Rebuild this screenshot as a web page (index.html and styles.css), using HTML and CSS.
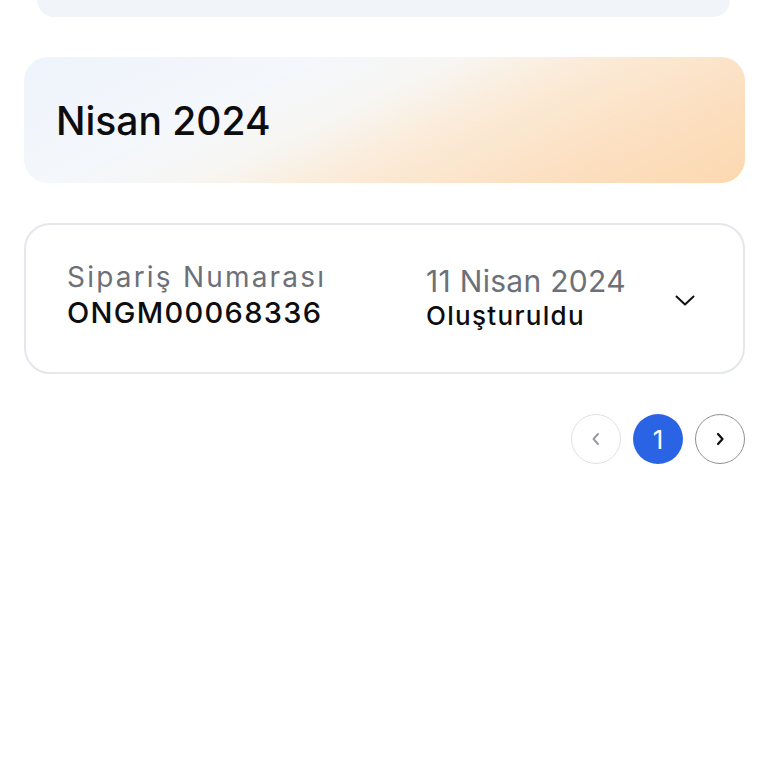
FILE: index.html
```html
<!DOCTYPE html>
<html lang="tr">
<head>
<meta charset="utf-8">
<title>Siparişlerim</title>
<link rel="stylesheet" href="styles.css">
</head>
<body>
<div class="top-card"></div>
<div class="month-banner">
  <h2 class="month-title">Nisan 2024</h2>
</div>
<div class="order-card">
  <div class="order-col order-col-left">
    <span class="order-label">Sipariş Numarası</span>
    <span class="order-value">ONGM00068336</span>
  </div>
  <div class="order-col order-col-right">
    <span class="order-date">11 Nisan 2024</span>
    <span class="order-status">Oluşturuldu</span>
  </div>
  <svg class="order-chevron" width="20" height="11" viewBox="0 0 20 11" fill="none"><path d="M1.5 1.5 L10 9.5 L18.5 1.5" stroke="#111" stroke-width="2" stroke-linecap="round" stroke-linejoin="round"/></svg>
</div>
<div class="pager">
  <button class="page-btn page-prev" aria-label="Önceki">
    <svg width="12" height="14" viewBox="0 0 12 14" fill="none"><path d="M8 2 L3.5 7 L8 12" stroke="#9a9ca1" stroke-width="2" stroke-linecap="round" stroke-linejoin="round"/></svg>
  </button>
  <button class="page-btn page-active">1</button>
  <button class="page-btn page-next" aria-label="Sonraki">
    <svg width="12" height="14" viewBox="0 0 12 14" fill="none"><path d="M4 2 L8.5 7 L4 12" stroke="#111" stroke-width="2.2" stroke-linecap="round" stroke-linejoin="round"/></svg>
  </button>
</div>
</body>
</html>
```

FILE: styles.css
```css
* { box-sizing: border-box; }
html, body { margin: 0; padding: 0; background: #ffffff; }
body {
  font-family: "Inter", "Open Sans", sans-serif;
  color: #111111;
  width: 768px;
}
.top-card {
  margin: 0 38px 0 37px;
  height: 17px;
  background: #f1f4f8;
  border-radius: 0 0 20px 20px;
}
.month-banner {
  margin: 40px 23px 0 24px;
  height: 126px;
  border-radius: 24px;
  background: linear-gradient(155deg, #eef4fc 0%, #f4f7fb 30%, #f7f6f3 44%, #fbebd8 58%, #fce0c2 78%, #fcd8b0 100%);
  display: flex;
  align-items: center;
  padding-left: 32px;
}
.month-title {
  margin: 0;
  font-size: 39px;
  font-weight: 500;
  color: #0d0d0f;
  letter-spacing: 0;
}
.order-card {
  margin: 40px 23px 0 24px;
  height: 151px;
  border: 2px solid #e4e7eb;
  border-radius: 26px;
  display: flex;
  align-items: center;
  padding: 0 48px 0 41px;
}
.order-col {
  display: flex;
  flex-direction: column;
}
.order-col-left { width: 359px; padding-bottom: 8px; }
.order-col-right { flex: 1; padding-bottom: 4px; }
.order-label {
  font-size: 28px;
  line-height: 36px;
  letter-spacing: 2.2px;
  color: #6d7077;
}
.order-value {
  font-size: 29px;
  line-height: 36px;
  letter-spacing: 1.3px;
  font-weight: 500;
  color: #0d0d0f;
}
.order-date {
  font-size: 30px;
  line-height: 38px;
  letter-spacing: 0.3px;
  color: #6d7077;
}
.order-status {
  font-size: 26px;
  line-height: 32px;
  letter-spacing: 1.3px;
  font-weight: 500;
  color: #0d0d0f;
}
.order-chevron { margin-top: 4px; }
.pager {
  margin: 40px 23px 0 0;
  display: flex;
  justify-content: flex-end;
  gap: 12px;
}
.page-btn {
  width: 50px;
  height: 50px;
  border-radius: 50%;
  padding: 0;
  display: flex;
  align-items: center;
  justify-content: center;
  background: #ffffff;
  font-family: "Inter", sans-serif;
}
.page-prev { border: 1.5px solid #dfe1e4; }
.page-next { border: 1.5px solid #8e9096; }
.page-active {
  border: none;
  background: #2a64e5;
  color: #ffffff;
  font-size: 26px;
  font-weight: 400;
}
```
